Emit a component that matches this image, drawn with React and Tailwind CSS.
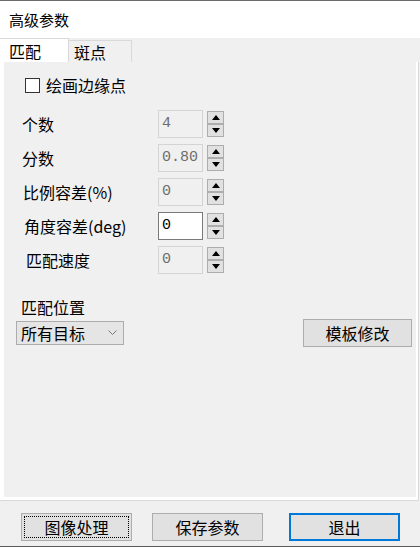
const fontCn = "font-['Noto_Sans_CJK_SC','Noto_Sans',sans-serif]";

const Spinner = () => (
  <div className="ml-[4px] flex h-[28px] w-[17px] flex-col justify-between py-[1px]">
    <div className="flex h-[13px] items-center justify-center border border-[#adadad] bg-[#e1e1e1]">
      <svg width="8" height="5" viewBox="0 0 8 5">
        <path d="M0 5 L4 0 L8 5 Z" fill="#000" />
      </svg>
    </div>
    <div className="flex h-[13px] items-center justify-center border border-[#adadad] bg-[#e1e1e1]">
      <svg width="8" height="5" viewBox="0 0 8 5">
        <path d="M0 0 L8 0 L4 5 Z" fill="#000" />
      </svg>
    </div>
  </div>
);

const rows = [
  { label: "个数", value: "4", pad: "ml-0" },
  { label: "分数", value: "0.80", pad: "ml-0" },
  { label: "比例容差(%)", value: "0", pad: "ml-[1px]" },
  { label: "角度容差(deg)", value: "0", pad: "ml-[2px]", active: true },
  { label: "匹配速度", value: "0", pad: "ml-[4px]" },
];

export default function App() {
  return (
    <div className={`flex h-[547px] w-[420px] flex-col overflow-hidden border-t border-b border-t-[#6b6b6b] border-b-[#5a5a5a] bg-[#f0f0f0] text-black ${fontCn}`}>
      {/* title */}
      <div className="flex h-[37px] items-center bg-white pl-[9px] text-[15px] leading-[20px]">
        高级参数
      </div>

      {/* tabs */}
      <div className="flex h-[24px] items-end">
        <div className="flex h-[24px] w-[69px] items-center border-t border-r border-[#d9d9d9] bg-white pl-[9px] text-[16px] leading-[20px]">
          匹配
        </div>
        <div className="flex h-[22px] w-[63px] items-center border-t border-r border-[#d9d9d9] pl-[5px] text-[16px] leading-[20px]">
          斑点
        </div>
      </div>

      {/* tab body */}
      <div className="flex h-[439px] w-[419px] border-r border-b border-[#d9d9d9] bg-white pb-[3px] pl-[4px] pr-[2px]">
        <div className="flex flex-1 flex-col bg-[#f0f0f0] text-[16px] leading-[20px]">
          <div className="mt-[15px] ml-[21px] flex h-[16px] items-center">
            <div className="h-[15px] w-[15px] border border-[#333] bg-white" />
            <span className="ml-[6px]">绘画边缘点</span>
          </div>

          <div className="mt-[17px] flex flex-col gap-[6px]">
            {rows.map((r) => (
              <div key={r.label} className="flex h-[28px] items-center pl-[18px]">
                <div className="w-[136px]">
                  <span className={r.pad}>{r.label}</span>
                </div>
                <div
                  className={
                    r.active
                      ? "flex h-[28px] w-[45px] items-center border border-[#7a7a7a] bg-white pl-[3px] font-['Liberation_Mono',monospace] text-[15px] text-black"
                      : "flex h-[28px] w-[45px] items-center border border-[#d4d4d4] bg-[#f0f0f0] pl-[3px] font-['Liberation_Mono',monospace] text-[15px] text-[#6d6d6d]"
                  }
                >
                  {r.value}
                </div>
                <Spinner />
              </div>
            ))}
          </div>

          <div className="mt-[23px] ml-[17px]">匹配位置</div>

          <div className="mt-[2px] flex h-[28px] items-center justify-between pl-[12px] pr-[4px]">
            <div className="flex h-[24px] w-[108px] items-center justify-between border border-[#adadad] bg-[#e5e5e5] pl-[4px] pr-[6px]">
              <span>所有目标</span>
              <svg width="9" height="6" viewBox="0 0 9 6">
                <path d="M0.5 0.5 L4.5 4.5 L8.5 0.5" fill="none" stroke="#777" strokeWidth="1" />
              </svg>
            </div>
            <div className="flex h-[28px] w-[109px] items-center justify-center border border-[#adadad] bg-[#e1e1e1]">
              模板修改
            </div>
          </div>
        </div>
      </div>

      {/* bottom buttons */}
      <div className="mt-[12px] flex h-[28px] text-[16px] leading-[20px]">
        <div className="ml-[21px] h-[28px] w-[111px] border border-[#adadad] bg-[#e1e1e1] p-[2px]">
          <div className="flex h-full items-center justify-center border border-dotted border-black">
            图像处理
          </div>
        </div>
        <div className="ml-[20px] flex h-[28px] w-[111px] items-center justify-center border border-[#adadad] bg-[#e1e1e1]">
          保存参数
        </div>
        <div className="ml-[26px] flex h-[28px] w-[111px] items-center justify-center border-2 border-[#0078d7] bg-[#e1e1e1]">
          退出
        </div>
      </div>
    </div>
  );
}
